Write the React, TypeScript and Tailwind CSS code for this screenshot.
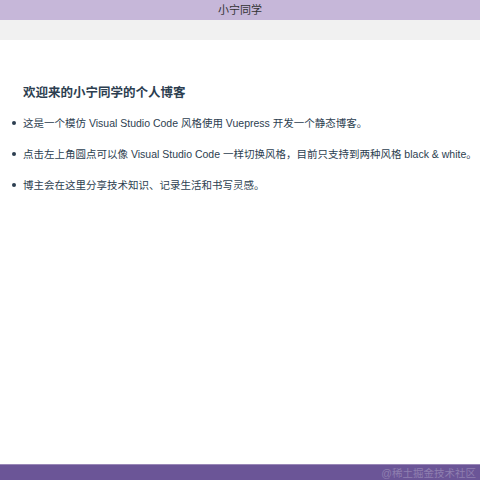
import React from "react";

const items = [
  "这是一个模仿 Visual Studio Code 风格使用 Vuepress 开发一个静态博客。",
  "点击左上角圆点可以像 Visual Studio Code 一样切换风格，目前只支持到两种风格 black & white。",
  "博主会在这里分享技术知识、记录生活和书写灵感。",
];

export default function App() {
  return (
    <div
      className="flex h-[480px] w-[480px] flex-col overflow-hidden bg-white text-[#2c3e50]"
      style={{ fontFamily: '"Liberation Sans", "Noto Sans CJK SC", sans-serif' }}
    >
      {/* Title bar */}
      <div className="flex h-5 items-center justify-center bg-[#c6b7d9] text-[11px] text-[#333]">
        小宁同学
      </div>
      <div className="h-5 bg-[#f1f1f1]" />

      {/* Content */}
      <main className="flex-1 pl-[23px] pt-[45px]">
        <h1 className="text-[12.5px] font-bold leading-4 text-[#2c3e50]">
          欢迎来的小宁同学的个人博客
        </h1>
        <ul className="mt-[14px] flex flex-col gap-[15px]">
          {items.map((t) => (
            <li key={t} className="relative whitespace-nowrap text-[10.5px] leading-4 text-[#2c3e50]">
              <span className="absolute -left-[11px] top-[6px] h-[4px] w-[4px] rounded-full bg-[#2c3e50]" />
              {t}
            </li>
          ))}
        </ul>
      </main>

      {/* Footer */}
      <footer className="relative h-4 border-t border-[#9a88b8] bg-[#6b5597]">
        <span className="absolute right-[4px] top-0 text-[10.5px] leading-4 text-[#8f7fb0]">
          @稀土掘金技术社区
        </span>
      </footer>
    </div>
  );
}
